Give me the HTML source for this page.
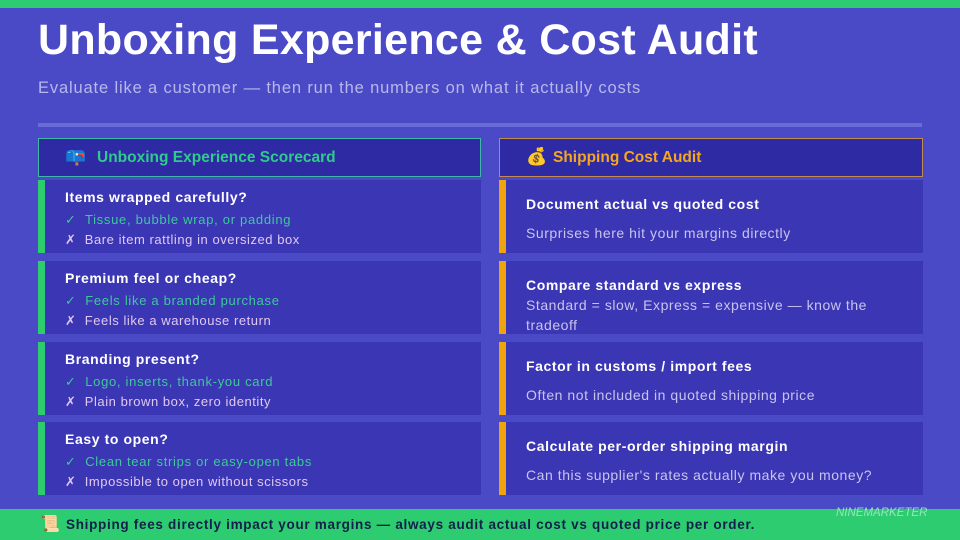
<!DOCTYPE html>
<html><head><meta charset="utf-8"><style>
*{margin:0;padding:0;box-sizing:border-box}
body{width:960px;height:540px;overflow:hidden;background:#4a4ac6;font-family:"Liberation Sans",sans-serif;position:relative}
.top{position:absolute;left:0;top:0;width:960px;height:8px;background:#2ecc71}
h1{position:absolute;left:38px;top:16px;font-size:43px;color:#fff;font-weight:bold;letter-spacing:0.3px}
.sub{position:absolute;left:38px;top:79px;font-size:16.5px;color:#b8b8ec;letter-spacing:0.85px}
.div{position:absolute;left:38px;top:123px;width:884px;height:4px;background:#6a6ad8}
.hdr{position:absolute;height:39px;top:138px;background:#2e2aa4;font-weight:bold;font-size:15.5px;padding:10px 0 0 0}
.hl{left:38px;width:443px;border:1px solid #3fb8a8;color:#2ecc8a;padding-left:58px}
.hr{left:499px;width:424px;border:1px solid #c08a50;color:#f5a623;padding-left:53px}
.ic{position:absolute;left:26px;top:8px;font-size:17px}
.card{position:absolute;height:73px;background:#3a36b4}
.l{left:38px;width:443px;border-left:7px solid #2ecc71;padding:9px 0 0 20px}
.r{left:499px;width:424px;border-left:7px solid #f0a30a;padding:16px 20px 0 20px}
.t{color:#fff;font-weight:bold;font-size:14px;margin-bottom:5px;letter-spacing:0.6px}
.g{color:#3ec99a;font-size:13px;line-height:20px;letter-spacing:0.7px}
.x{color:#e0c8f0;font-size:13px;line-height:20px;letter-spacing:0.55px}
.r .t{margin-bottom:11px}
.d{color:#c8c4ee;font-size:14px;line-height:20px;letter-spacing:0.55px}
.bot{position:absolute;left:0;top:509px;width:960px;height:31px;background:#2ecc71}
.bt{position:absolute;left:66px;top:8px;font-size:13.5px;font-weight:bold;color:#10204a;letter-spacing:0.7px;white-space:nowrap}
.nm{position:absolute;left:836px;top:-2px;font-size:11.5px;font-style:italic;color:#90e8b8}
</style></head><body>
<div class="top"></div>
<h1>Unboxing Experience &amp; Cost Audit</h1>
<div class="sub">Evaluate like a customer — then run the numbers on what it actually costs</div>
<div class="div"></div>
<div class="hdr hl"><span class="ic">📪</span>Unboxing Experience Scorecard</div>
<div class="hdr hr"><span class="ic">💰</span>Shipping Cost Audit</div>

<div class="card l" style="top:180px"><div class="t">Items wrapped carefully?</div><div class="g">✓&nbsp; Tissue, bubble wrap, or padding</div><div class="x">✗&nbsp; Bare item rattling in oversized box</div></div>
<div class="card l" style="top:261px"><div class="t">Premium feel or cheap?</div><div class="g">✓&nbsp; Feels like a branded purchase</div><div class="x">✗&nbsp; Feels like a warehouse return</div></div>
<div class="card l" style="top:342px"><div class="t">Branding present?</div><div class="g">✓&nbsp; Logo, inserts, thank-you card</div><div class="x">✗&nbsp; Plain brown box, zero identity</div></div>
<div class="card l" style="top:422px"><div class="t">Easy to open?</div><div class="g">✓&nbsp; Clean tear strips or easy-open tabs</div><div class="x">✗&nbsp; Impossible to open without scissors</div></div>

<div class="card r" style="top:180px"><div class="t">Document actual vs quoted cost</div><div class="d">Surprises here hit your margins directly</div></div>
<div class="card r" style="top:261px;padding-top:16px"><div class="t" style="margin-bottom:2px">Compare standard vs express</div><div class="d">Standard = slow, Express = expensive — know the tradeoff</div></div>
<div class="card r" style="top:342px"><div class="t">Factor in customs / import fees</div><div class="d">Often not included in quoted shipping price</div></div>
<div class="card r" style="top:422px"><div class="t">Calculate per-order shipping margin</div><div class="d">Can this supplier's rates actually make you money?</div></div>

<div class="bot"><span style="position:absolute;left:40px;top:5px;font-size:16px">📜</span><div class="bt">Shipping fees directly impact your margins — always audit actual cost vs quoted price per order.</div><div class="nm">NINEMARKETER</div></div>
</body></html>
